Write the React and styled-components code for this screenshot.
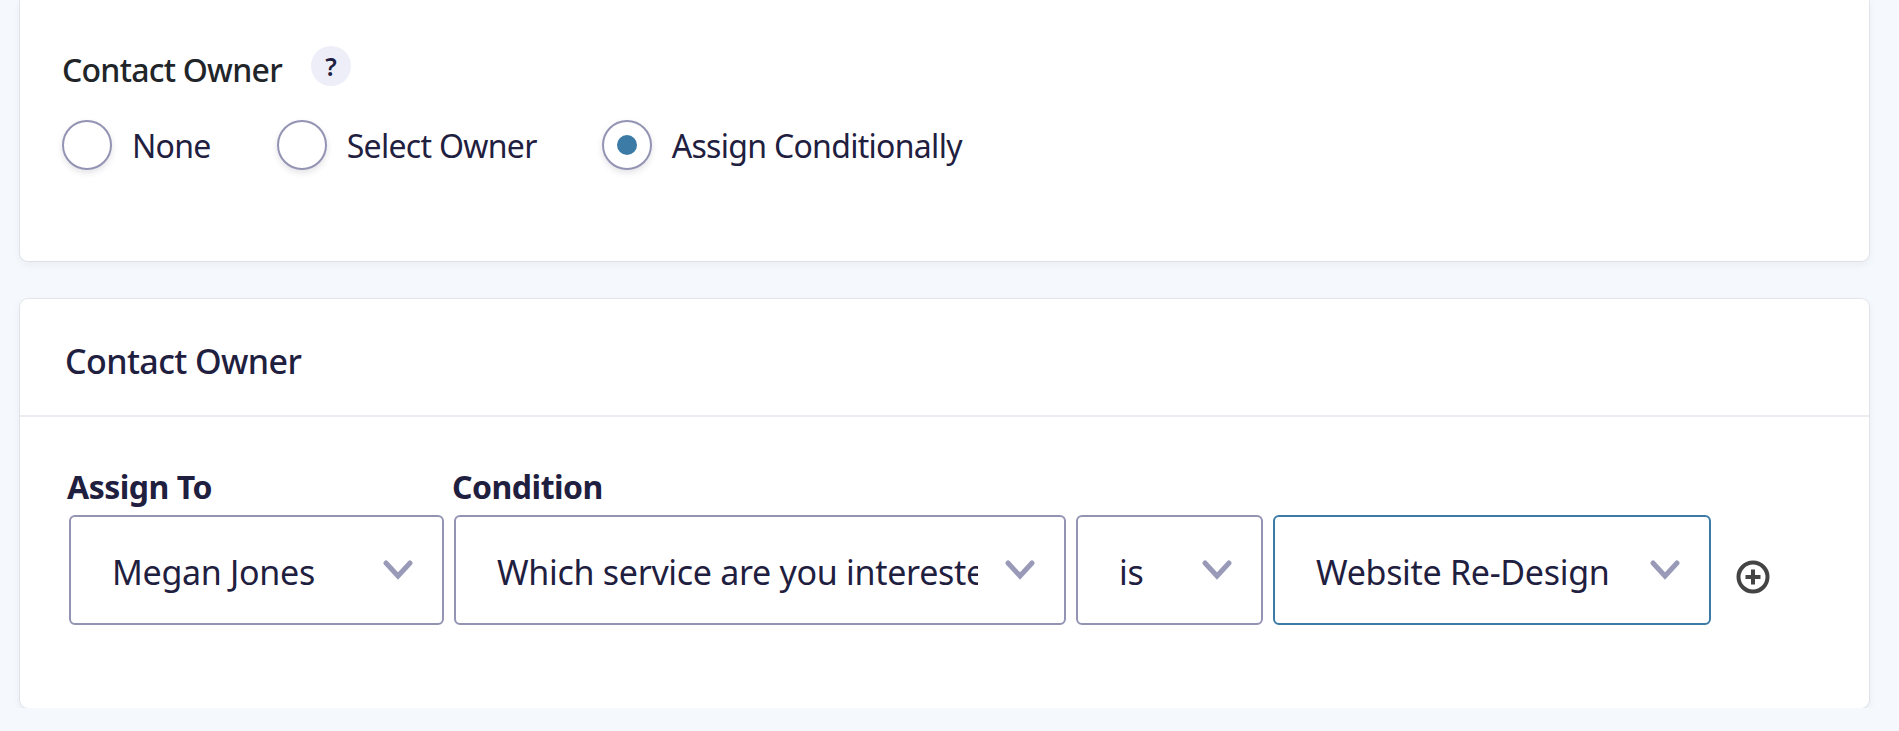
import React from "react";
import styled, { createGlobalStyle } from "styled-components";

const COLORS = {
  page: "#f5f8fc",
  ink: "#1f2040",
  label: "#212529",
  line: "#ecedf2",
  field: "#9393b3",
  accent: "#3c7ba6",
  chevron: "#9999b8",
};

const GlobalStyle = createGlobalStyle`
  html, body {
    margin: 0;
    background: ${COLORS.page};
    overflow: hidden;
  }
  body {
    font-family: "Noto Sans", "Open Sans", sans-serif;
    color: ${COLORS.ink};
  }
`;

const Page = styled.div`
  display: flex;
  flex-direction: column;
  gap: 38px;
  width: 1849px;
  margin-left: 20px;
`;

const Card = styled.section`
  background: #fff;
  border-radius: 8px;
  box-shadow: 0 0 0 1px rgba(31, 32, 64, 0.07), 0 3px 10px rgba(31, 32, 64, 0.06);
`;

const OwnerCard = styled(Card)`
  height: 261px;
  box-sizing: border-box;
  padding: 46px 42px 0;
  border-radius: 0 0 8px 8px;
`;

const LabelRow = styled.div`
  display: flex;
  align-items: flex-start;
  gap: 29px;
  height: 72px;
`;

const FieldLabel = styled.span`
  font-size: 32px;
  font-weight: 500;
  line-height: 40px;
  letter-spacing: -0.75px;
  color: ${COLORS.label};
  padding-top: 4px;
`;

const HelpBadge = styled.span`
  width: 40px;
  height: 40px;
  border-radius: 50%;
  background: #eeeef9;
  display: flex;
  align-items: center;
  justify-content: center;
  font-size: 25px;
  font-weight: 600;
`;

const RadioRow = styled.div`
  display: flex;
  align-items: center;
`;

const RadioOption = styled.label`
  display: flex;
  align-items: center;
  gap: 20px;
  margin-right: ${(p) => p.$gap}px;
  font-size: 32px;
  letter-spacing: -0.7px;
  line-height: 50px;
`;

const RadioText = styled.span`
  padding-top: 3px;
`;

const RadioCircle = styled.span`
  width: 50px;
  height: 50px;
  box-sizing: border-box;
  border: 2px solid ${COLORS.field};
  border-radius: 50%;
  background: #fff;
  box-shadow: 0 3px 6px rgba(31, 32, 64, 0.12);
  display: flex;
  align-items: center;
  justify-content: center;

  &::after {
    content: "";
    display: ${(p) => (p.$checked ? "block" : "none")};
    width: 20px;
    height: 20px;
    border-radius: 50%;
    background: ${COLORS.accent};
  }
`;

const RuleCard = styled(Card)`
  height: 409px;
`;

const CardHeader = styled.header`
  height: 118px;
  box-sizing: border-box;
  border-bottom: 2px solid ${COLORS.line};
  padding: 40px 45px 0;
  font-size: 34px;
  font-weight: 500;
  line-height: 44px;
  letter-spacing: -0.6px;
`;

const CardBody = styled.div`
  padding: 48px 47px 0 49px;
`;

const LabelGrid = styled.div`
  display: flex;
  height: 50px;
`;

const ColumnLabel = styled.span`
  width: ${(p) => p.$width}px;
  margin-left: -2px;
  margin-right: 2px;
  font-size: 32px;
  font-weight: 700;
  line-height: 44px;
  letter-spacing: -0.5px;
`;

const FieldRow = styled.div`
  display: flex;
  align-items: center;
  gap: 10px;
`;

const Select = styled.div`
  width: ${(p) => p.$width}px;
  height: 110px;
  box-sizing: border-box;
  border: 2px solid ${(p) => (p.$active ? COLORS.accent : COLORS.field)};
  border-radius: 6px;
  padding: 0 28px 0 41px;
  display: flex;
  align-items: center;
  gap: 26px;
  background: #fff;
`;

const SelectValue = styled.span`
  flex: 1;
  min-width: 0;
  overflow: hidden;
  white-space: nowrap;
  font-size: 34px;
  letter-spacing: -0.3px;
  line-height: 46px;
  padding-top: 4px;
`;

const Chevron = styled.svg`
  flex: none;
  width: 32px;
  height: 20px;
  color: ${COLORS.chevron};
`;

const AddButton = styled.svg`
  flex: none;
  width: 34px;
  height: 34px;
  margin-left: 15px;
  margin-top: 13px;
  color: #444;
`;

const ChevronIcon = () => (
  <Chevron viewBox="0 0 32 20" fill="none">
    <path d="M4 3 L16 16 L28 3" stroke="currentColor" strokeWidth="5" strokeLinecap="round" strokeLinejoin="miter" />
  </Chevron>
);

const App = () => (
  <>
    <GlobalStyle />
    <Page>
      <OwnerCard>
        <LabelRow>
          <FieldLabel>Contact Owner</FieldLabel>
          <HelpBadge>?</HelpBadge>
        </LabelRow>
        <RadioRow>
          <RadioOption $gap={66}>
            <RadioCircle />
            <RadioText>None</RadioText>
          </RadioOption>
          <RadioOption $gap={65}>
            <RadioCircle />
            <RadioText>Select Owner</RadioText>
          </RadioOption>
          <RadioOption>
            <RadioCircle $checked />
            <RadioText>Assign Conditionally</RadioText>
          </RadioOption>
        </RadioRow>
      </OwnerCard>
      <RuleCard>
        <CardHeader>Contact Owner</CardHeader>
        <CardBody>
          <LabelGrid>
            <ColumnLabel $width={385}>Assign To</ColumnLabel>
            <ColumnLabel>Condition</ColumnLabel>
          </LabelGrid>
          <FieldRow>
            <Select $width={375}>
              <SelectValue>Megan Jones</SelectValue>
              <ChevronIcon />
            </Select>
            <Select $width={612}>
              <SelectValue>Which service are you interested in?</SelectValue>
              <ChevronIcon />
            </Select>
            <Select $width={187}>
              <SelectValue>is</SelectValue>
              <ChevronIcon />
            </Select>
            <Select $width={438} $active>
              <SelectValue>Website Re-Design</SelectValue>
              <ChevronIcon />
            </Select>
            <AddButton viewBox="0 0 34 34" fill="none">
              <circle cx="17" cy="17" r="14.5" stroke="currentColor" strokeWidth="4" />
              <path d="M17 9.5 V24.5 M9.5 17 H24.5" stroke="currentColor" strokeWidth="4" />
            </AddButton>
          </FieldRow>
        </CardBody>
      </RuleCard>
    </Page>
  </>
);

export default App;
